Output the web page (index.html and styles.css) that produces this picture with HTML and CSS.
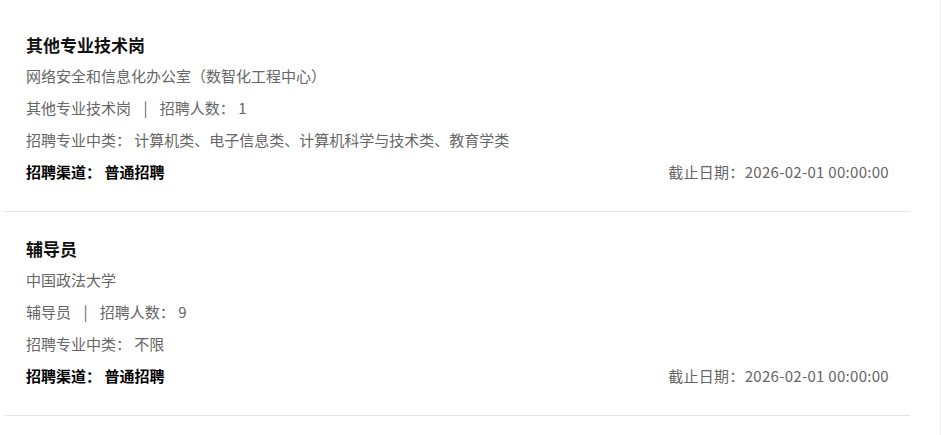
FILE: index.html
```html
<!DOCTYPE html>
<html lang="zh-CN">
<head>
  <meta charset="UTF-8">
  <meta name="viewport" content="width=device-width, initial-scale=1.0">
  <title>招聘岗位</title>
  <link rel="stylesheet" href="styles.css">
</head>
<body>
  <div class="page">
    <ul class="job-list">
      <li class="job">
        <div class="job-title">其他专业技术岗</div>
        <div class="job-row">网络安全和信息化办公室（数智化工程中心）</div>
        <div class="job-row">
          <span>其他专业技术岗</span>
          <span class="sep">|</span>
          <span>招聘人数：&nbsp;1</span>
        </div>
        <div class="job-row">招聘专业中类：&nbsp;计算机类、电子信息类、计算机科学与技术类、教育学类</div>
        <div class="job-row job-foot">
          <span class="channel">招聘渠道：&nbsp;普通招聘</span>
          <span class="deadline">截止日期：2026-02-01 00:00:00</span>
        </div>
      </li>
      <li class="job">
        <div class="job-title">辅导员</div>
        <div class="job-row">中国政法大学</div>
        <div class="job-row">
          <span>辅导员</span>
          <span class="sep">|</span>
          <span>招聘人数：&nbsp;9</span>
        </div>
        <div class="job-row">招聘专业中类：&nbsp;不限</div>
        <div class="job-row job-foot">
          <span class="channel">招聘渠道：&nbsp;普通招聘</span>
          <span class="deadline">截止日期：2026-02-01 00:00:00</span>
        </div>
      </li>
    </ul>
  </div>
</body>
</html>
```

FILE: styles.css
```css
html, body {
  margin: 0;
  height: 100%;
}

body {
  font-family: "Noto Sans CJK SC", "Noto Sans", sans-serif;
  background-color: #fff;
  color: #666;
  font-size: 15px;
}

.page {
  box-sizing: border-box;
  min-height: 100%;
  padding: 8px 30px 0 5px;
  border-right: 1px solid #f0f0f2;
}

.job-list {
  list-style: none;
  margin: 0;
  padding: 0;
  width: 905px;
}

.job {
  padding: 25px 21px 23px;
  border-bottom: 1px solid #e4e4e8;
}

.job-title {
  font-size: 17px;
  font-weight: bold;
  line-height: 24px;
  color: #111;
  margin-bottom: 3px;
}

.job-row {
  line-height: 32px;
  white-space: nowrap;
}

  .job-row .sep {
    margin: 0 9px;
  }

.job-foot {
  display: flex;
  justify-content: space-between;
}

  .job-foot .channel {
    font-weight: bold;
    color: #000;
  }

  .job-foot .deadline {
    letter-spacing: 0.3px;
  }
```
